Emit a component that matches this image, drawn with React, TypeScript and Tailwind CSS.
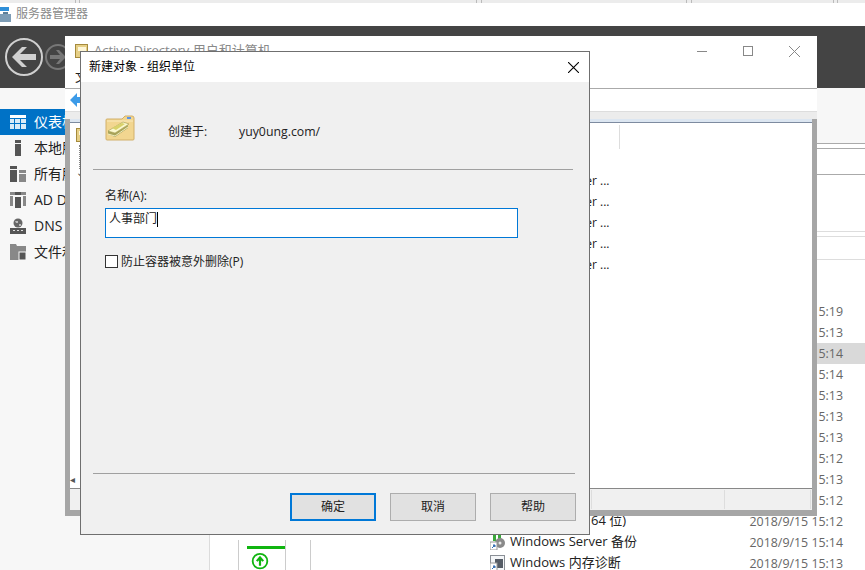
const uiFont = { fontFamily: '"Open Sans", "Noto Sans CJK SC", sans-serif' }

const navItems = [
  { label: '仪表板', icon: 'dash', active: true },
  { label: '本地服务器', icon: 'local' },
  { label: '所有服务器', icon: 'all' },
  { label: 'AD DS', icon: 'ad' },
  { label: 'DNS', icon: 'dns' },
  { label: '文件和存储服务', icon: 'file' },
]

const times = ['15:19', '15:13', '15:14', '15:14', '15:13', '15:13', '15:13', '15:12', '15:13', '15:12', '15:12', '15:14', '15:13']

function NavIcon({ name }: { name: string }) {
  if (name === 'dash')
    return (
      <svg width="16" height="14" viewBox="0 0 16 14" fill="#d9ebf7">
        <rect x="0" y="0" width="16" height="3" fill="#fff" />
        <rect x="0" y="4" width="4" height="4" />
        <rect x="5" y="4" width="5" height="4" />
        <rect x="11" y="4" width="5" height="4" />
        <rect x="0" y="9" width="4" height="5" />
        <rect x="5" y="9" width="5" height="5" />
        <rect x="11" y="9" width="5" height="5" />
      </svg>
    )
  if (name === 'local')
    return (
      <svg width="16" height="16" viewBox="0 0 16 16" fill="#555">
        <rect x="5" y="0" width="6" height="3" />
        <rect x="5" y="4" width="6" height="12" />
      </svg>
    )
  if (name === 'all')
    return (
      <svg width="16" height="16" viewBox="0 0 16 16">
        <rect x="0" y="0" width="7" height="3" fill="#555" />
        <rect x="0" y="4" width="7" height="12" fill="#555" />
        <rect x="9" y="4" width="7" height="3" fill="#888" />
        <rect x="9" y="8" width="7" height="8" fill="#888" />
      </svg>
    )
  if (name === 'ad')
    return (
      <svg width="16" height="16" viewBox="0 0 16 16">
        <rect x="0" y="0" width="16" height="3" fill="#888" />
        <rect x="0" y="4" width="3" height="10" fill="#888" />
        <rect x="13" y="4" width="3" height="10" fill="#888" />
        <rect x="5" y="0" width="6" height="3" fill="#555" />
        <rect x="5" y="5" width="6" height="11" fill="#555" />
      </svg>
    )
  if (name === 'dns')
    return (
      <svg width="16" height="16" viewBox="0 0 16 16">
        <circle cx="8" cy="5" r="4.5" fill="#666" />
        <path d="M5 3h3v2H6zM9 6h2v2H9z" fill="#bbb" />
        <rect x="0" y="10" width="16" height="6" fill="#555" />
        <rect x="3" y="12" width="2" height="1" fill="#ddd" />
        <rect x="7" y="12" width="2" height="1" fill="#ddd" />
        <rect x="11" y="12" width="2" height="1" fill="#ddd" />
      </svg>
    )
  return (
    <svg width="16" height="16" viewBox="0 0 16 16">
      <path d="M0 0h6l1 2h9v14H0z" fill="#888" />
      <rect x="9" y="8" width="7" height="8" fill="#555" stroke="#f7f7f7" />
    </svg>
  )
}

function FolderIcon() {
  return (
    <svg width="30" height="28" viewBox="0 0 30 28">
      <path d="M1 6q0-1 1-1h15l3-3h7q2 0 2 2v21q0 1-1 1H2q-1 0-1-1z" fill="#f2d690" stroke="#d2b06a" />
      <path d="M2 7h26" stroke="#f9e9bd" />
      <rect x="22" y="3" width="4" height="2" fill="#5c94e6" />
      <path d="M3 20l7 3 13-9v-3l-13 8-7-2z" fill="#a9a45a" />
      <path d="M3 17l15-9 6 2-14 9z" fill="#fbf8cf" stroke="#8f8c3e" strokeWidth="0.5" />
      <path d="M7 14l10-5 3 1-9 6z" fill="#d9d26a" />
      <path d="M3 20l7 2 13-9" stroke="#f6f3c8" strokeWidth="0.9" fill="none" />
    </svg>
  )
}

function SmallFolder({ className }: { className: string }) {
  return (
    <svg className={className} width="13" height="14" viewBox="0 0 13 14">
      <rect x="0.5" y="0.5" width="12" height="13" fill="#e6cf86" stroke="#a58a3c" />
      <rect x="3" y="3" width="8" height="4" fill="#fdf6d8" />
    </svg>
  )
}

function ServerManager() {
  return (
    <div className="flex h-full w-full flex-col bg-white">
      <div className="flex h-[3px] shrink-0">
        <div className="flex w-[283px] bg-[#ececec]">
          <div className="w-[76px] border-r border-[#bbb]" />
          <div className="w-[4px] border-r border-[#bbb]" />
        </div>
        <div className="flex w-[582px] bg-[#ececec] pl-[1px]">
          <div className="w-[193px] border-r border-[#bbb]" />
          <div className="w-[5px] border-r border-[#bbb]" />
          <div className="w-[205px] border-r border-[#bbb]" />
          <div className="w-[5px] border-r border-[#bbb]" />
          <div className="w-[142px] border-r border-[#bbb]" />
          <div className="w-[4px] border-r border-[#bbb]" />
        </div>
      </div>
      <div className="flex h-[23px] shrink-0 items-center gap-[5px] pb-[1px]">
        <svg width="11" height="15" viewBox="0 0 11 15">
          <rect x="0" y="0" width="9" height="4" fill="#2f8fd8" />
          <rect x="3" y="5" width="5" height="2" fill="#5c7f99" />
          <rect x="0" y="7" width="11" height="8" fill="#7d9cb5" />
        </svg>
        <span className="text-[12px] leading-none text-[#8a8a8a]">服务器管理器</span>
      </div>
      <div className="flex h-[62px] shrink-0 items-center gap-[2px] bg-[#444444] pl-[5px]">
        <div className="flex h-[38px] w-[38px] items-center justify-center rounded-full border-[2px] border-[#d0d0d0]">
          <svg width="24" height="20" viewBox="0 0 24 20" fill="#d0d0d0">
            <path d="M0 10L10 0h5L8 7h16v6H8l7 7h-5z" />
          </svg>
        </div>
        <div className="flex h-[26px] w-[26px] items-center justify-center rounded-full border-[2px] border-[#777]">
          <svg width="16" height="14" viewBox="0 0 16 14" fill="#777">
            <path d="M16 7L9 0H6l4 5H0v4h10l-4 5h3z" />
          </svg>
        </div>
      </div>
      <div className="flex min-h-0 flex-1">
        <div className="w-[210px] shrink-0 border-r border-[#dcdcdc] bg-[#f7f7f7] pt-[21px]">
          {navItems.map((item) => (
            <div
              key={item.label}
              className={`flex h-[26px] items-center gap-[8px] whitespace-nowrap pl-[10px] text-[14px] ${
                item.active ? 'bg-[#0072c6] text-white' : 'text-[#222]'
              }`}
            >
              <NavIcon name={item.icon} />
              <span className="mb-[2px]">{item.label}</span>
            </div>
          ))}
        </div>
        <div className="relative flex-1 bg-white">
          <div className="absolute right-0 top-[55px] h-[6px] w-[48px] border-y border-[#aaa]" />
          <div className="absolute right-0 top-[86px] w-[48px] border-t border-[#aaa]" />
          <div className="absolute right-0 top-[143px] h-[6px] w-[48px] border-y border-[#ddd]" />
          <div className="absolute right-0 top-[171px] w-[48px] border-t border-[#ddd]" />
          <div className="absolute right-0 top-0 h-[55px] w-[48px] bg-[#f7f7f7]" />
          <div className="absolute bottom-0 left-[28px] flex h-[30px] w-[48px] flex-col border-x border-[#ccc] pt-[6px]">
            <div className="ml-[8px] h-[3px] bg-[#10b510]" />
            <svg className="ml-[11px] mt-[3px]" width="20" height="20" viewBox="0 0 20 20" fill="none">
              <circle cx="10" cy="10" r="8" stroke="#10b510" strokeWidth="2" />
              <path d="M10 15V7M6.5 10L10 6l3.5 4" stroke="#10b510" strokeWidth="2.4" />
            </svg>
          </div>
          <div className="absolute bottom-0 left-[75px] h-[30px] w-[26px] border-r border-[#ccc]" />
          <div className="absolute left-[280px] top-[213px] w-[375px] text-[12.4px] leading-[21px] text-[#666]">
            {times.map((t, i) => (
              <div
                key={i}
                className={`flex h-[21px] justify-end pr-[22px] ${i === 2 ? 'bg-[linear-gradient(90deg,#fff_0,#fff_327px,#d9d9d9_327px)]' : ''}`}
              >
                2018/9/15 {t}
              </div>
            ))}
          </div>
          <div className="absolute left-[381px] top-[422px] text-[13px] leading-[21px] text-[#222]">64 位)</div>
          <div className="absolute left-[280px] top-[443px] flex h-[21px] items-center gap-[5px] text-[13px] text-[#222]">
            <svg width="15" height="16" viewBox="0 0 15 16">
              <path d="M3 0h3v7H3zM8 0h3v7H8z" fill="#3aa83a" />
              <circle cx="10" cy="9" r="5" fill="#8a8a8a" />
              <circle cx="10" cy="9" r="1.5" fill="#e8e8e8" />
              <rect x="0" y="8" width="7" height="8" fill="#fff" stroke="#999" />
              <path d="M2 14l3-3M3 11h2v2" stroke="#2a6fc0" />
            </svg>
            Windows Server 备份
          </div>
          <div className="absolute left-[280px] top-[464px] flex h-[21px] items-center gap-[5px] text-[13px] text-[#222]">
            <svg width="15" height="16" viewBox="0 0 15 16">
              <rect x="0.5" y="0.5" width="14" height="15" fill="#f4f6f8" stroke="#8a8f96" />
              <rect x="5" y="4" width="8" height="9" fill="#555c66" />
              <rect x="0" y="8" width="7" height="8" fill="#fff" stroke="#999" />
              <path d="M2 14l3-3M3 11h2v2" stroke="#2a6fc0" />
            </svg>
            Windows 内存诊断
          </div>
        </div>
      </div>
    </div>
  )
}

function AdWindow() {
  return (
    <div className="absolute left-[65px] top-[36px] flex h-[480px] w-[752px] flex-col bg-white text-[12px] text-[#222]">
      <div className="flex h-[30px] shrink-0 items-center pl-[10px]">
        <SmallFolder className="mr-[6px]" />
        <span className="text-[13px] text-[#8a8a8a]">Active Directory 用户和计算机</span>
        <div className="ml-auto flex items-center gap-[36px] pr-[17px]">
          <span className="h-[1px] w-[10px] bg-[#888]" />
          <span className="h-[10px] w-[10px] border border-[#888]" />
          <svg width="11" height="11" viewBox="0 0 11 11" stroke="#888">
            <path d="M0 0l11 11M11 0L0 11" />
          </svg>
        </div>
      </div>
      <div className="flex h-[23px] shrink-0 items-center border-b border-[#aaa] pl-[10px] text-[13px]">文件(F)</div>
      <div className="flex h-[23px] shrink-0 items-center border-b border-[#ddd] pl-[5px]">
        <svg width="11" height="14" viewBox="0 0 11 14" fill="#3c9be8">
          <path d="M7 0v4h4v6H7v4L0 7z" />
        </svg>
      </div>
      <div className="h-[7px] shrink-0 bg-[#ececec]" />
      <div className="flex min-h-0 flex-1 flex-col border-x-[5px] border-b-[6px] border-[#a6a6a6]">
        <div className="h-[4px] shrink-0 border-b border-[#7d8ba0] bg-[#dce6f1]" />
        <div className="relative flex min-h-0 flex-1 flex-col bg-white">
          <SmallFolder className="absolute left-[6px] top-[5px]" />
          <span className="absolute left-[9px] top-[22px] h-[24px] border-l border-dotted border-[#888]" />
          <span className="absolute left-[6px] top-[44px] text-[10px] leading-none text-[#444]">⌄</span>
          <span className="absolute left-[549px] top-[2px] h-[24px] border-l border-[#ddd]" />
          <div className="absolute left-[491px] top-[47px] flex flex-col text-[12px] leading-[21px]">
            {[0, 1, 2, 3, 4].map((i) => (
              <span key={i}>Server ...</span>
            ))}
          </div>
          <span className="absolute bottom-[4px] left-0 text-[10px] leading-none text-[#555]">◂</span>
        </div>
        <div className="flex h-[22px] shrink-0 border-t border-[#888] bg-[#f0f0f0] py-[1px]">
          <div className="w-[522px] border-r border-[#ddd]" />
          <div className="w-[133px] border-r border-[#ddd]" />
          <div className="w-[86px] border-r border-[#ddd]" />
        </div>
      </div>
    </div>
  )
}

function Dialog() {
  return (
    <div className="absolute left-[80px] top-[51px] flex h-[484px] w-[510px] flex-col border border-[#6f6f6f] bg-[#f0f0f0] text-[12px] leading-none text-[#222]">
      <div className="flex h-[30px] shrink-0 items-center justify-between bg-white pl-[8px] pr-[10px] text-black">
        <span>新建对象 - 组织单位</span>
        <svg width="11" height="11" viewBox="0 0 11 11" stroke="#000" strokeWidth="1.1">
          <path d="M0 0l11 11M11 0L0 11" />
        </svg>
      </div>
      <div className="ml-[24px] mt-[32px] flex h-[28px] shrink-0 items-center">
        <FolderIcon />
        <span className="ml-[33px] mt-[8px] w-[71px]">创建于:</span>
        <span className="mt-[8px] text-[12.3px]">yuy0ung.com/</span>
      </div>
      <div className="mx-[12px] mt-[27px] h-[1px] w-[480px] shrink-0 bg-[#a0a0a0]" />
      <div className="mt-[20px] shrink-0 pl-[24px]">名称(A):</div>
      <div className="ml-[24px] mt-[6px] flex h-[30px] w-[413px] shrink-0 items-center border border-[#0078d7] bg-white pb-[8px] pl-[3px]">
        <span>人事部门</span>
        <span className="h-[15px] w-[1px] bg-black" />
      </div>
      <div className="ml-[24px] mt-[17px] flex shrink-0 items-center gap-[3px]">
        <span className="h-[13px] w-[13px] border border-[#333] bg-white" />
        <span>防止容器被意外删除(P)</span>
      </div>
      <div className="flex-1" />
      <div className="mx-[12px] h-[1px] w-[482px] shrink-0 bg-[#a0a0a0]" />
      <div className="mt-[19px] flex shrink-0 gap-[14px] pl-[209px]">
        <button className="h-[28px] w-[86px] border-[2px] border-[#0078d7] bg-[#e1e1e1]">确定</button>
        <button className="h-[28px] w-[86px] border border-[#adadad] bg-[#e1e1e1]">取消</button>
        <button className="h-[28px] w-[86px] border border-[#adadad] bg-[#e1e1e1]">帮助</button>
      </div>
      <div className="h-[13px] shrink-0" />
    </div>
  )
}

export default function App() {
  return (
    <div className="relative h-[570px] w-[865px] overflow-hidden" style={uiFont}>
      <ServerManager />
      <AdWindow />
      <Dialog />
    </div>
  )
}
